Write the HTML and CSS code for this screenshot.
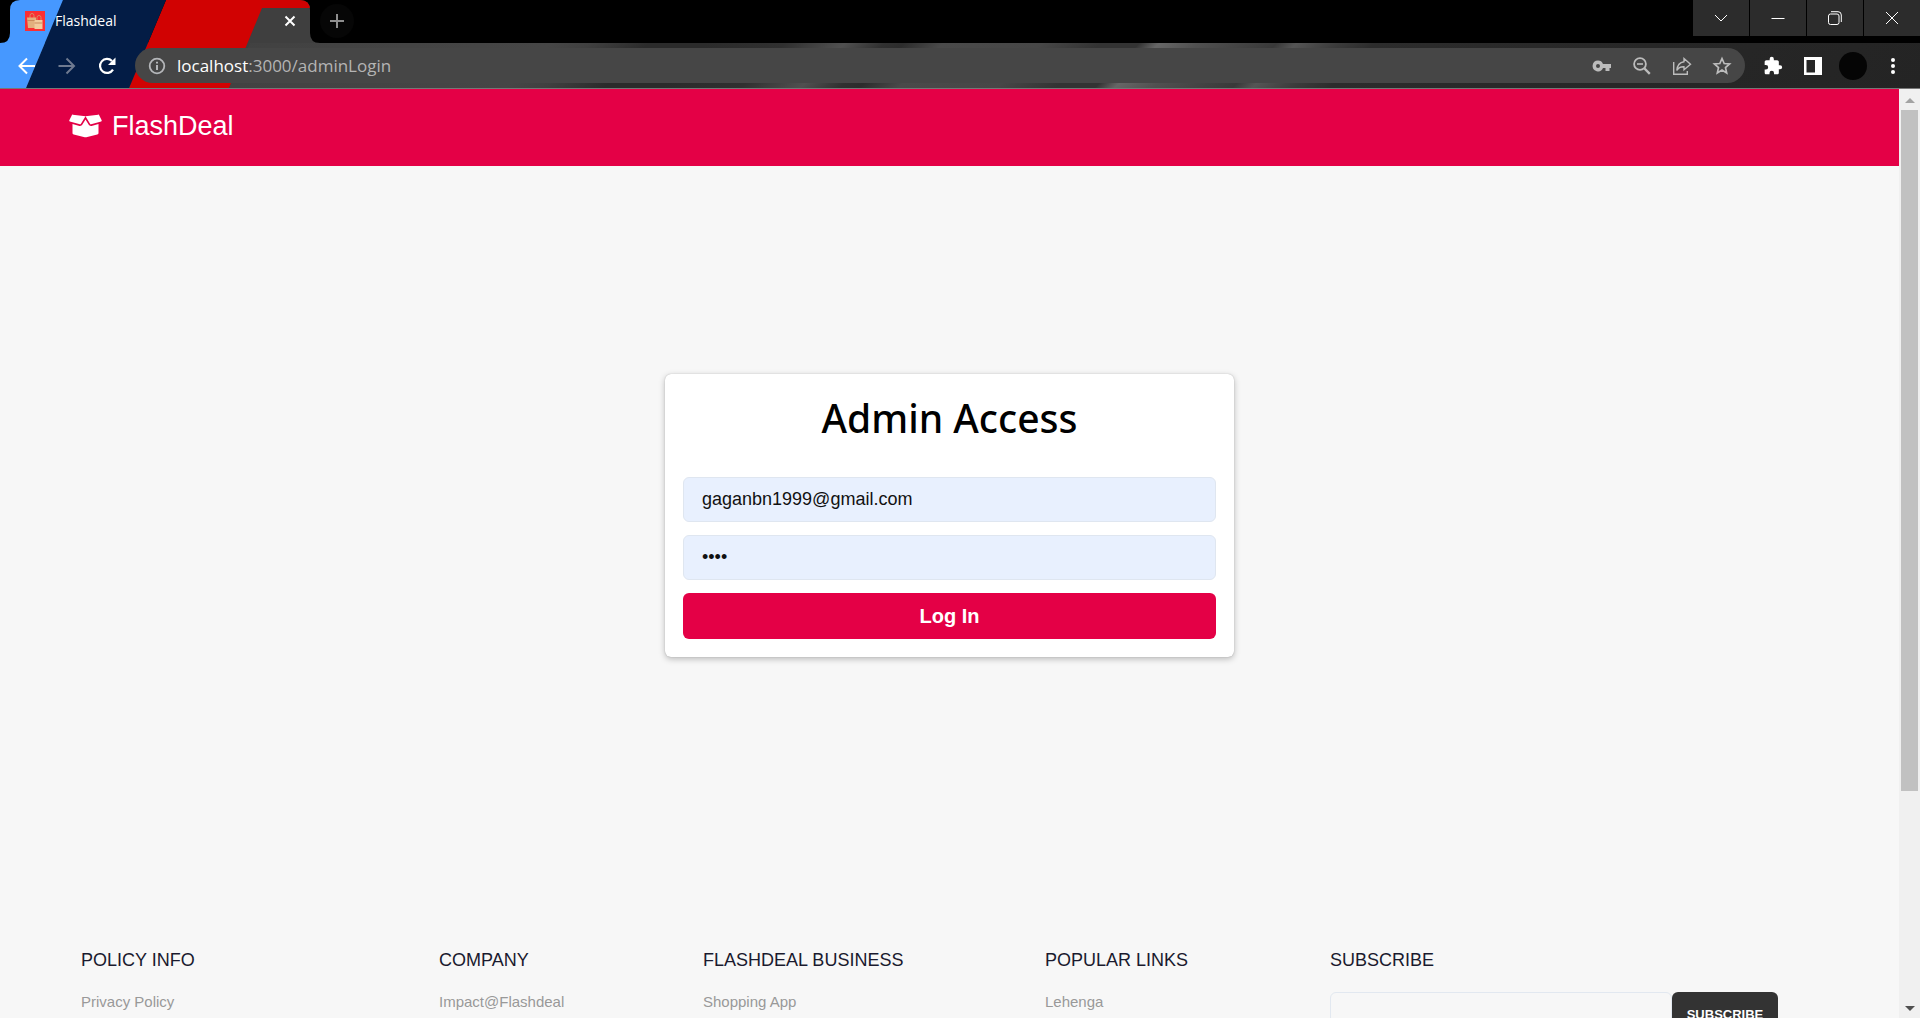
FILE: index.html
```html
<!DOCTYPE html>
<html lang="en">
<head>
<meta charset="utf-8">
<meta name="viewport" content="width=device-width, initial-scale=1">
<title>Flashdeal</title>
<link rel="stylesheet" href="styles.css">
</head>
<body>
<div class="browser">
  <svg class="theme" width="330" height="88" viewBox="0 0 330 88" aria-hidden="true">
    <defs>
      <clipPath id="frame"><path d="M0 43Q10 43 10 33V10Q10 0 20 0H300Q310 0 310 10V33Q310 43 320 43H262V88H0Z"/></clipPath>
    </defs>
    <g clip-path="url(#frame)">
      <path fill="#3f3f3f" d="M200 0H330V43H250L229 88H200Z"/>
      <path fill="#d10202" d="M166 0H330V8H262L229 88H129Z"/>
      <path fill="#031c45" d="M63 0H166L129 88H26Z"/>
      <path fill="#4698ff" d="M0 0H63L26 88H0Z"/>
    </g>
  </svg>

  <div class="tabstrip">
    <div class="tab">
      <svg width="20" height="20" viewBox="0 0 20 20" aria-hidden="true">
        <rect width="20" height="20" fill="#fb2f33"/>
        <path d="M5 7V4.500Q5 2.500 7 2.500T9 4.500V7M12 9V6.500Q12 4.500 14 4.500T16 6.500V9" fill="none" stroke="#d98c62"/>
        <path d="M2 6.500H11V17H3Z" fill="#e2b07e"/>
        <path d="M9.500 9H17.500V18H9.500Z" fill="#f2cb9c"/>
        <path d="M2 9.500H9.500M9.500 12H17.500" stroke="#c98a5c"/>
      </svg>
      <span class="tab-title">Flashdeal</span>
      <button class="icon-button" aria-label="Close tab">
        <svg width="12" height="12" viewBox="0 0 12 12"><path d="M1.500 1.500L10.500 10.500M10.500 1.500L1.500 10.500" stroke="#fff" stroke-width="2"/></svg>
      </button>
    </div>
    <button class="new-tab" aria-label="New tab">
      <svg width="16" height="16" viewBox="0 0 16 16"><path d="M8 1V15M1 8H15" stroke="#8e8e8e" stroke-width="2"/></svg>
    </button>
    <div class="window-controls">
      <button aria-label="Search tabs"><svg width="14" height="14" viewBox="0 0 14 14"><path d="M1 4L7 10L13 4"/></svg></button>
      <button aria-label="Minimize"><svg width="14" height="14" viewBox="0 0 14 14"><path d="M0.500 7.500H13.500"/></svg></button>
      <button aria-label="Restore"><svg width="14" height="14" viewBox="0 0 14 14"><rect x="0.500" y="3" width="10.500" height="10.500" rx="2"/><path d="M3 0.700H10Q13.300 0.700 13.300 4V11"/></svg></button>
      <button aria-label="Close"><svg width="14" height="14" viewBox="0 0 14 14"><path d="M1 1L13 13M13 1L1 13"/></svg></button>
    </div>
  </div>

  <div class="toolbar">
    <button class="icon-button" aria-label="Back"><svg width="18" height="18" viewBox="0 0 18 18"><path d="M17 9H2.500M9 1.500L1.500 9L9 16.500" fill="none" stroke="#fff" stroke-width="2"/></svg></button>
    <button class="icon-button" aria-label="Forward"><svg width="18" height="18" viewBox="0 0 18 18"><path d="M0.500 9H15.500M8.500 1.500L16 9L8.500 16.500" fill="none" stroke="#6f7a90" stroke-width="2"/></svg></button>
    <button class="icon-button" aria-label="Reload"><svg width="18" height="18" viewBox="0 0 18 18"><path d="M15 12.600A7 7 0 1 1 14 4" fill="none" stroke="#fff" stroke-width="2.200"/><path d="M17.500 0.500V8H10Z" fill="#fff"/></svg></button>
    <div class="address">
      <svg class="info" width="18" height="18" viewBox="0 0 18 18" aria-hidden="true"><circle cx="9" cy="9" r="7.300" fill="none" stroke="#b4b6b9" stroke-width="1.800"/><path d="M9 8V13M9 4.800V6.600" stroke="#b4b6b9" stroke-width="2"/></svg>
      <span class="url"><span class="host">localhost</span>:3000/adminLogin</span>
      <button class="icon-button" aria-label="Passwords"><svg width="20" height="20" viewBox="0 0 20 20"><path fill-rule="evenodd" fill="#bcbcbc" d="M6 4.600A5.400 5.400 0 0 1 11 8H19V12H17.500V15H13.500V12H11A5.400 5.400 0 1 1 6 4.600ZM6 8A2 2 0 1 0 6 12A2 2 0 1 0 6 8Z"/></svg></button>
      <button class="icon-button" aria-label="Zoom"><svg width="20" height="20" viewBox="0 0 20 20"><g fill="none" stroke="#bcbcbc"><circle cx="8" cy="8" r="5.900" stroke-width="1.800"/><path d="M5 8H11" stroke-width="1.600"/><path d="M12.500 12.500L17.800 17.800" stroke-width="2.400"/></g></svg></button>
      <button class="icon-button" aria-label="Share"><svg width="20" height="20" viewBox="0 0 20 20"><g fill="none" stroke="#bcbcbc" stroke-width="1.400"><path d="M1.700 6V18.300H15.300V15"/><path d="M12 2.500L18.500 8.200L12 13.800V10.800Q7 10.500 4.800 14.500Q5.500 6.500 12 5.700Z"/></g></svg></button>
      <button class="icon-button" aria-label="Bookmark this page"><svg width="20" height="20" viewBox="0 0 20 20"><path d="M10 2.500L12.200 7.500L17.600 8L13.500 11.600L14.700 17L10 14.100L5.300 17L6.500 11.600L2.400 8L7.800 7.500Z" fill="none" stroke="#bcbcbc" stroke-width="1.700"/></svg></button>
    </div>
    <div class="extras">
      <button class="icon-button" aria-label="Extensions"><svg width="20" height="20" viewBox="0 0 24 24"><path fill="#fff" d="M20.500 11H19V7c0-1.100-.9-2-2-2h-4V3.500a2.500 2.500 0 0 0-5 0V5H4c-1.100 0-2 .9-2 2v3.800h1.500a2.700 2.700 0 0 1 0 5.400H2V20c0 1.100.9 2 2 2h3.800v-1.500a2.700 2.700 0 0 1 5.400 0V22H17c1.100 0 2-.9 2-2v-4h1.500a2.500 2.500 0 0 0 0-5z"/></svg></button>
      <button class="icon-button" aria-label="Side panel"><svg width="20" height="20" viewBox="0 0 20 20"><path fill="#fff" fill-rule="evenodd" d="M1 1H19V19H1ZM3.500 4V16.500H12V4Z"/></svg></button>
      <button class="avatar" aria-label="Profile"></button>
      <button class="icon-button" aria-label="Menu"><svg width="20" height="20" viewBox="0 0 20 20"><g fill="#fff"><circle cx="10" cy="4" r="2"/><circle cx="10" cy="10" r="2"/><circle cx="10" cy="16" r="2"/></g></svg></button>
    </div>
  </div>
</div>

<div class="viewport">
  <div class="page">
    <header class="site-header">
      <a class="brand" href="#">
        <svg width="33" height="26" viewBox="0 0 640 512" aria-hidden="true"><path fill="#fff" d="M425.700 256c-16.900 0-32.800-9-41.400-23.400L320 126l-64.200 106.600c-8.700 14.500-24.600 23.500-41.500 23.500-4.500 0-9-.6-13.300-1.900L64 215v178c0 14.700 10 27.500 24.200 31l216.200 54.100c10.200 2.500 20.900 2.500 31 0L551.800 424c14.200-3.600 24.200-16.400 24.200-31V215l-137 39.100c-4.300 1.300-8.800 1.900-13.300 1.900zm212.600-112.200L586.800 41c-3.100-6.200-9.800-9.800-16.700-8.900L320 64l91.700 152.100c3.800 6.300 11.400 9.300 18.500 7.300l197.900-56.500c9.900-2.900 14.700-13.900 10.200-23.100zM53.200 41L1.700 143.800c-4.600 9.200.3 20.200 10.100 23l197.900 56.500c7.100 2 14.700-1 18.500-7.300L320 64 69.800 32.100c-6.900-.8-13.500 2.700-16.600 8.900z"/></svg>
        <span>FlashDeal</span>
      </a>
    </header>

    <main class="main">
      <form class="card">
        <h1>Admin Access</h1>
        <input class="field" type="email" aria-label="Email" value="gaganbn1999@gmail.com">
        <input class="field" type="password" aria-label="Password" value="1234">
        <button class="login" type="button">Log In</button>
      </form>
    </main>

    <footer class="footer">
      <section><h2>POLICY INFO</h2><a href="#">Privacy Policy</a></section>
      <section><h2>COMPANY</h2><a href="#">Impact@Flashdeal</a></section>
      <section><h2>FLASHDEAL BUSINESS</h2><a href="#">Shopping App</a></section>
      <section><h2>POPULAR LINKS</h2><a href="#">Lehenga</a></section>
      <section>
        <h2>SUBSCRIBE</h2>
        <form class="subscribe">
          <input type="email" aria-label="Subscribe with your email">
          <button type="button">SUBSCRIBE</button>
        </form>
      </section>
    </footer>
  </div>
  <div class="scrollbar" aria-hidden="true">
    <svg width="10" height="5" viewBox="0 0 10 5"><path d="M0 5L5 0L10 5Z" fill="#a3a3a3"/></svg>
    <div class="track"><div class="thumb"></div></div>
    <svg width="10" height="5" viewBox="0 0 10 5"><path d="M0 0L5 5L10 0Z" fill="#505050"/></svg>
  </div>
</div>
</body>
</html>
```
FILE: styles.css
```css
* { box-sizing: border-box; }

body {
  margin: 0;
  height: 100vh;
  display: flex;
  flex-direction: column;
  overflow: hidden;
  background: #f7f7f7;
  font-family: "Liberation Sans", Arial, sans-serif;
}

button {
  border: 0;
  padding: 0;
  background: none;
  font: inherit;
  cursor: pointer;
}

a { color: inherit; text-decoration: none; }
svg { display: block; flex: none; }

/* Browser frame */
.browser {
  position: relative;
  flex: none;
  background: #000;
  border-bottom: 1px solid #777;
  font-family: "Open Sans", sans-serif;
}

.theme { position: absolute; left: 0; top: 0; z-index: 1; }

.tabstrip {
  position: relative;
  z-index: 2;
  display: flex;
  height: 43px;
}

.tab {
  width: 300px;
  margin-left: 10px;
  padding: 0 14px 2px 15px;
  display: flex;
  align-items: center;
  gap: 10px;
  color: #fff;
  font-size: 14px;
}

.tab-title { flex: 1; }
.icon-button { display: grid; place-items: center; flex: none; }

.new-tab {
  width: 34px;
  height: 34px;
  margin: 4px 0 0 10px;
  border-radius: 50%;
  background: #060606;
  display: grid;
  place-items: center;
}

.window-controls {
  margin-left: auto;
  display: flex;
  height: 36px;
}

.window-controls button {
  width: 57px;
  border-left: 1px solid #000;
  background: #2c2c2c;
  display: grid;
  place-items: center;
}

.window-controls svg { fill: none; stroke: #fff; }

.toolbar {
  display: flex;
  align-items: center;
  height: 45px;
  padding: 0 17px 0 18px;
  gap: 22px;
  background: linear-gradient(135deg, #3e3e3e 0, #464646 28%, #404040 30%, #2b2b2b 33%, #2b2b2b 36%, #303030 40%, #505050 43%, #303030 45%, #2c2c2c 46%, #4a4a4a 48%, #474747 53%, #333 56%, #333 58%, #666 59%, #505050 61%, #393939 65%, #555 66%, #3c3c3c 68%, #2c2c2c 70%, #272727 84%, #242424 100%);
}

.toolbar > * { position: relative; z-index: 2; }

.address {
  flex: 1;
  min-width: 0;
  height: 35px;
  margin-left: -3px;
  padding: 0 13px;
  border-radius: 18px;
  background: #464646;
  display: flex;
  align-items: center;
  gap: 20px;
}

.info { margin-right: -9px; }
.url { flex: 1; color: #b4b4b4; font-size: 17px; }
.host { color: #fff; }

.extras { display: flex; align-items: center; gap: 20px; margin-left: -4px; }
.avatar { width: 28px; height: 28px; margin: 0 -4px; border-radius: 50%; background: #050505; }

/* Page */
.viewport { flex: 1; min-height: 0; display: flex; }
.page { flex: 1; min-width: 0; overflow: hidden; }

.site-header { display: flex; padding: 21px 69px 24px; background: #e40046; }

.brand {
  display: flex;
  align-items: center;
  gap: 10px;
  height: 32px;
  color: #fff;
  font-size: 27px;
}

.main { padding: 208px 16px; display: flex; justify-content: center; }

.card {
  width: 100%;
  max-width: 569px;
  padding: 18px;
  display: grid;
  gap: 13px;
  border-radius: 6px;
  background: #fff;
  box-shadow: 0 0 1px rgba(0, 0, 0, .3), 0 2px 6px rgba(0, 0, 0, .25);
}

h1 {
  margin: 0 0 20px;
  font: 500 39px/52px "Noto Sans", sans-serif;
  color: #000;
  text-align: center;
}

.field {
  width: 100%;
  height: 45px;
  padding: 0 18px;
  border: 1px solid #dfe6f0;
  border-radius: 6px;
  background: #e8f0fe;
  color: #111;
  font: 18px "Liberation Sans", Arial, sans-serif;
}

.login {
  height: 46px;
  border-radius: 6px;
  background: #e40046;
  color: #fff;
  font-size: 20px;
  font-weight: 700;
}

.footer {
  padding: 83px 121px 32px 81px;
  display: grid;
  grid-template-columns: 358fr 264fr 342fr 285fr 448fr;
}

h2 { margin: 0 0 20px; font-size: 18px; line-height: 24px; font-weight: 400; color: #1a1a2e; }
.footer a { display: block; font-size: 15px; line-height: 20px; color: #999; }

.subscribe { display: flex; height: 45px; }
.subscribe input { flex: 1; min-width: 0; border: 1px solid #e2e8f0; border-radius: 6px; background: transparent; }
.subscribe button { width: 106px; border-radius: 6px; background: #333; color: #fff; font-size: 13px; font-weight: 700; }

/* Scrollbar */
.scrollbar {
  width: 21px;
  flex: none;
  padding: 9px 2px 7px;
  display: flex;
  flex-direction: column;
  align-items: center;
  gap: 7px;
  background: #f0f0f0;
}

.track { flex: 1; width: 17px; display: grid; grid-template-rows: 681fr 208fr; }
.thumb { background: #c1c1c1; }
```
